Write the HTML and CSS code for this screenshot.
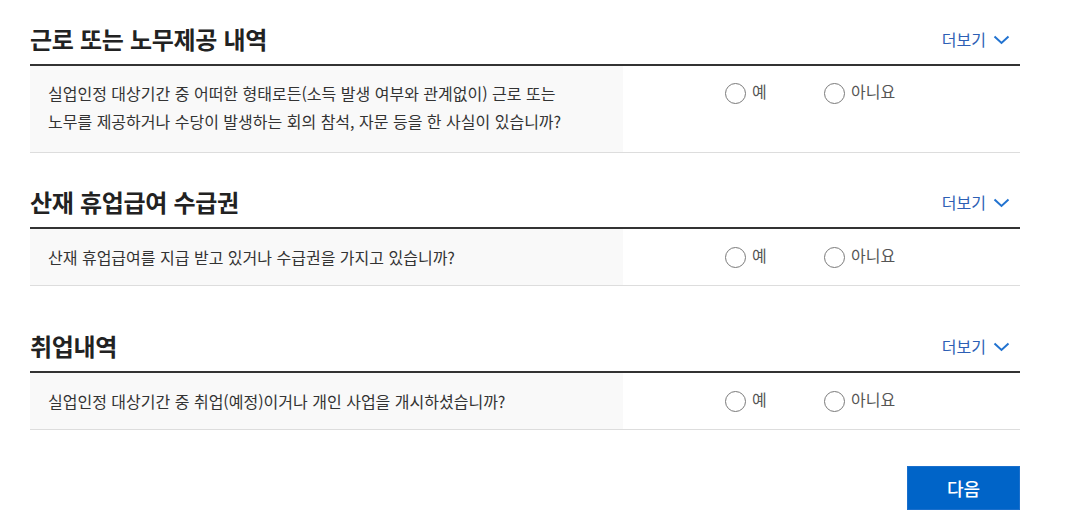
FILE: index.html
```html
<!DOCTYPE html>
<html lang="ko">
<head>
<meta charset="utf-8">
<link rel="stylesheet" href="styles.css">
</head>
<body>
<div class="page">
  <section class="sec">
    <div class="sec-head">
      <h2 class="sec-title">근로 또는 노무제공 내역</h2>
      <a class="more">더보기<svg class="chev" width="17" height="10" viewBox="0 0 17 10"><path d="M1.5 1.5 L8.5 8 L15.5 1.5" fill="none" stroke="#2273d0" stroke-width="2"/></svg></a>
    </div>
    <div class="row">
      <div class="q q--tall">실업인정 대상기간 중 어떠한 형태로든(소득 발생 여부와 관계없이) 근로 또는<br>노무를 제공하거나 수당이 발생하는 회의 참석, 자문 등을 한 사실이 있습니까?</div>
      <div class="ans ans--tall">
        <label class="opt"><span class="radio"></span><span class="lbl">예</span></label>
        <label class="opt"><span class="radio"></span><span class="lbl">아니요</span></label>
      </div>
    </div>
  </section>

  <section class="sec sec--2">
    <div class="sec-head">
      <h2 class="sec-title">산재 휴업급여 수급권</h2>
      <a class="more">더보기<svg class="chev" width="17" height="10" viewBox="0 0 17 10"><path d="M1.5 1.5 L8.5 8 L15.5 1.5" fill="none" stroke="#2273d0" stroke-width="2"/></svg></a>
    </div>
    <div class="row">
      <div class="q">산재 휴업급여를 지급 받고 있거나 수급권을 가지고 있습니까?</div>
      <div class="ans">
        <label class="opt"><span class="radio"></span><span class="lbl">예</span></label>
        <label class="opt"><span class="radio"></span><span class="lbl">아니요</span></label>
      </div>
    </div>
  </section>

  <section class="sec sec--3">
    <div class="sec-head">
      <h2 class="sec-title">취업내역</h2>
      <a class="more">더보기<svg class="chev" width="17" height="10" viewBox="0 0 17 10"><path d="M1.5 1.5 L8.5 8 L15.5 1.5" fill="none" stroke="#2273d0" stroke-width="2"/></svg></a>
    </div>
    <div class="row">
      <div class="q">실업인정 대상기간 중 취업(예정)이거나 개인 사업을 개시하셨습니까?</div>
      <div class="ans">
        <label class="opt"><span class="radio"></span><span class="lbl">예</span></label>
        <label class="opt"><span class="radio"></span><span class="lbl">아니요</span></label>
      </div>
    </div>
  </section>

  <div class="actions">
    <button class="btn-next">다음</button>
  </div>
</div>
</body>
</html>
```

FILE: styles.css
```css
* { box-sizing: border-box; }
html, body {
  margin: 0;
  padding: 0;
  background: #fff;
}
body {
  font-family: "Noto Sans CJK KR", "Noto Sans", sans-serif;
  color: #333;
}
.page {
  width: 990px;
  margin-left: 30px;
  padding-top: 14px;
}
.sec--2 { margin-top: 24px; }
.sec--3 { margin-top: 35px; }
.sec-head {
  display: flex;
  justify-content: space-between;
  align-items: center;
  height: 52px;
  border-bottom: 2px solid #333;
  padding-right: 10px;
}
.sec-title {
  margin: 0;
  font-size: 24px;
  font-weight: 700;
  color: #222;
  line-height: 30px;
  letter-spacing: -0.3px;
}
.more {
  display: flex;
  align-items: center;
  gap: 7px;
  font-size: 16px;
  color: #2d5fb5;
  line-height: 20px;
}
.chev { display: block; margin-top: 1px; }
.row {
  display: flex;
  border-bottom: 1px solid #ddd;
}
.q {
  width: 593px;
  background: #f9f9f9;
  padding: 14px 18px;
  font-size: 16px;
  line-height: 28px;
  color: #333;
}
.q--tall { padding: 13px 18px 17px; }
.ans {
  flex: 1;
  display: flex;
  align-items: flex-start;
  padding: 14px 0 0 102px;
}
.ans--tall { padding-top: 13px; }
.opt {
  display: flex;
  align-items: center;
  width: 99px;
  height: 28px;
  gap: 6px;
}
.radio {
  width: 21px;
  height: 21px;
  border: 1.5px solid #7a7a7a;
  border-radius: 50%;
  background: #fff;
  flex: none;
}
.lbl {
  font-size: 16px;
  color: #555;
  line-height: 20px;
  margin-top: -4px;
}
.actions {
  display: flex;
  justify-content: flex-end;
  margin-top: 36px;
}
.btn-next {
  width: 113px;
  height: 44px;
  background: #0064c8;
  border: 1px solid #1a6fcc;
  color: #fff;
  font-family: "Noto Sans CJK KR", "Noto Sans", sans-serif;
  font-size: 18px;
  font-weight: 500;
  padding: 0;
}
```
